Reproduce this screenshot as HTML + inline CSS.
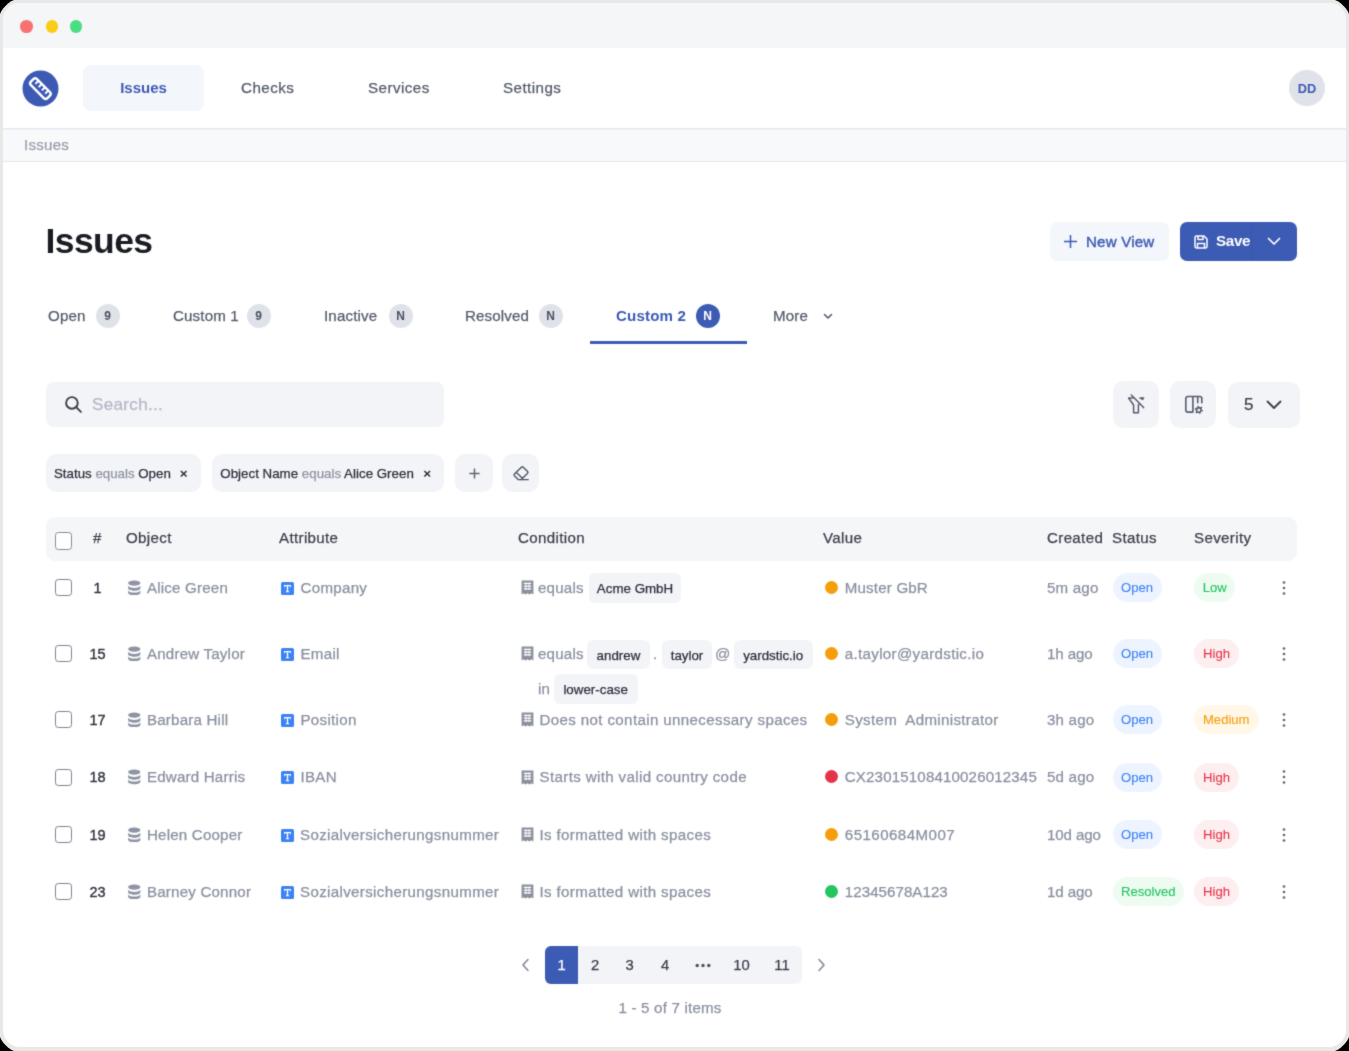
<!DOCTYPE html>
<html>
<head>
<meta charset="utf-8">
<title>Issues</title>
<style>
*{box-sizing:border-box;margin:0;padding:0}
html,body{width:1349px;height:1051px;overflow:hidden;background:#000;font-family:"Liberation Sans",sans-serif;}
.abs{position:absolute}
#frame{position:absolute;left:0;top:0;width:1349px;height:1051px;background:#e8e8e6;clip-path:polygon(0px 14px,1.3px 11.2px,3.3px 8.3px,5.7px 5.7px,8.3px 3.3px,11.2px 1.3px,14px 0px,1335px 0px,1337.8px 1.3px,1340.7px 3.3px,1343.3px 5.7px,1345.7px 8.3px,1347.7px 11.2px,1349px 14px,1349px 1037px,1347.7px 1039.8px,1345.7px 1042.7px,1343.3px 1045.3px,1340.7px 1047.7px,1337.8px 1049.7px,1335px 1051px,14px 1051px,11.2px 1049.7px,8.3px 1047.7px,5.7px 1045.3px,3.3px 1042.7px,1.3px 1039.8px,0px 1037px);overflow:hidden}
#win{position:absolute;left:3px;top:3px;width:1343px;height:1044px;background:#fff;border-radius:17px;overflow:hidden}
/* coordinates inside #win are offset by -3px; use #pg with translate to keep page coords */
#pg{position:absolute;left:-3px;top:-3px;width:1349px;height:1051px;will-change:transform;-webkit-font-smoothing:antialiased;filter:url(#soft)}
#titlebar{left:0;top:0;width:1349px;height:48.400px;background:#f4f6f8}
.dot{position:absolute;width:12.600px;height:12.600px;border-radius:50%;top:20.200px}
#nav{left:0;top:48px;width:1349px;height:81px;background:#fff}
#crumb{left:0;top:129px;width:1349px;height:32.500px;background:#f8f9fb}
.hl{left:0;width:1349px;height:1px;background:#e4e6ed}
.t{position:absolute;white-space:nowrap;line-height:20px;height:20px;-webkit-text-stroke:0.250px currentColor}
.b{font-weight:bold;-webkit-text-stroke:0 transparent}
.navitem{font-size:15.200px;letter-spacing:0.430px;color:#555b6b;top:78.300px}

.tab{font-size:15.100px;letter-spacing:0.150px;color:#555b6b;top:305.600px}
.badge{position:absolute;top:303.500px;width:24px;height:24px;border-radius:50%;background:#dfe2e8;color:#4b5160;font-size:12px;font-weight:bold;text-align:center;line-height:24px}
.ibtn{position:absolute;background:#f3f4f8;border-radius:8px}
.chip{position:absolute;top:454.100px;height:38.300px;border-radius:10px;background:#f3f4f8}
.ct{font-size:13.300px;top:463.800px;color:#2b2f3a}
.ct i{font-style:normal;color:#8e94a3}

.th{font-size:15.100px;letter-spacing:0.350px;color:#3a3f4b;top:528.400px}
.cb{position:absolute;left:54.600px;width:17px;height:17px;border:1.600px solid #7b8195;border-radius:3.300px;background:#fff;margin-top:1.100px}
.num{font-size:14.500px;-webkit-text-stroke:0.380px currentColor;color:#2f343f;margin-top:0.800px;left:77.600px;width:40px;text-align:center}
.g{font-size:15.100px;letter-spacing:0.200px;color:#8a90a0;margin-top:0.800px}
.cchip{position:absolute;height:29.500px;border-radius:6px;background:#f3f4f8;font-size:13.350px;line-height:31px;color:#2b2f3a;-webkit-text-stroke:0.250px #2b2f3a;text-align:center;white-space:nowrap}
.vdot{position:absolute;left:824.700px;width:13.300px;height:13.300px;border-radius:50%;margin-top:0.600px}
.pill{position:absolute;height:29px;border-radius:14.500px;font-size:13.100px;line-height:29.600px;margin-top:0.400px;-webkit-text-stroke:0.100px currentColor;text-align:center;white-space:nowrap}
.open{left:1112.500px;width:49.200px;background:#eef4ff;color:#3b82f6}
.res{left:1112.500px;width:71.700px;background:#edfbf1;color:#22c55e}
.high{left:1193.900px;width:45.200px;background:#fdeef0;color:#e5344a}
.low{left:1193.900px;width:41.500px;background:#edfbf1;color:#22c55e}
.med{left:1193.900px;width:64.700px;background:#fff7e8;color:#f59e0b}
.pg{font-size:14.800px;color:#3a3f4b;top:954.800px;text-align:center}
</style>
</head>
<body>
<svg width="0" height="0" style="position:absolute"><defs><filter id="soft" x="0" y="0" width="100%" height="100%" color-interpolation-filters="sRGB"><feConvolveMatrix order="3" kernelMatrix="0.0192 0.1001 0.0192 0.1001 0.5228 0.1001 0.0192 0.1001 0.0192" edgeMode="duplicate" preserveAlpha="false"/></filter></defs></svg>
<div id="frame"><div id="win"><div id="pg">

<!-- title bar -->
<div id="titlebar" class="abs"></div>
<div class="dot" style="left:20.400px;background:#f87171"></div>
<div class="dot" style="left:45.800px;background:#facc15"></div>
<div class="dot" style="left:69.900px;background:#4ade80"></div>

<!-- nav -->
<div id="nav" class="abs"></div>
<svg class="abs" style="left:22px;top:69.500px" width="37" height="37" viewBox="0 0 37 37">
  <circle cx="18.500" cy="18.500" r="18" fill="#3c5ab4"/>
  <g transform="translate(18.400 18.600) rotate(45)" fill="none" stroke="#fff">
    <rect x="-11.700" y="-4.300" width="23.400" height="8.600" rx="2.600" stroke-width="2.400"/>
    <path d="M-6.900 -4.300v4.500M-2.300 -4.300v4.500M2.300 -4.300v4.500M6.900 -4.300v4.500" stroke-width="2"/>
  </g>
</svg>
<div class="abs" style="left:83px;top:65px;width:121px;height:46px;border-radius:8px;background:#f3f6fb"></div>
<div class="t b" style="left:83px;width:121px;text-align:center;top:78px;font-size:15px;color:#3d5ab3">Issues</div>
<div class="t navitem" style="left:241px">Checks</div>
<div class="t navitem" style="left:368px">Services</div>
<div class="t navitem" style="left:503px">Settings</div>
<div class="abs" style="left:1288.900px;top:70.400px;width:36px;height:36px;border-radius:50%;background:#dfe2e9"></div>
<div class="t b" style="left:1288.900px;width:36px;text-align:center;top:78.600px;font-size:12.800px;color:#3d5ab3">DD</div>

<!-- breadcrumb -->
<div id="crumb" class="abs"></div>
<div class="abs hl" style="top:128px"></div>
<div class="abs hl" style="top:129px;background:#eff0f5"></div>
<div class="abs hl" style="top:161px"></div>
<div class="t" style="left:24px;top:135.400px;font-size:15.100px;letter-spacing:0.250px;color:#9a9fad">Issues</div>

<!-- heading -->
<div class="t b" style="left:45.500px;top:220.200px;height:42px;line-height:42px;font-size:35.500px;letter-spacing:-0.600px;color:#1a1c23">Issues</div>


<!-- New View / Save -->
<div class="abs" style="left:1049.500px;top:222.300px;width:119.500px;height:38.400px;border-radius:7px;background:#f3f6fb"></div>
<svg class="abs" style="left:1063px;top:234.300px" width="15" height="15" viewBox="0 0 15 15"><path d="M7.5 1v13M1 7.5h13" stroke="#3d5ab3" stroke-width="1.5" fill="none"/></svg>
<div class="t" style="left:1086px;top:232.100px;font-size:15.100px;letter-spacing:0.200px;-webkit-text-stroke:0.400px #3d5ab3;color:#3d5ab3">New View</div>
<div class="abs" style="left:1180.200px;top:222.300px;width:117px;height:38.300px;border-radius:7px;background:#3c5bb4"></div>
<div class="abs" style="left:1251px;top:222.300px;width:1px;height:38.400px;background:#3857ae"></div>
<svg class="abs" style="left:1193px;top:233.700px" width="16" height="16" viewBox="0 0 16 16" fill="none" stroke="#fff" stroke-width="1.5" stroke-linejoin="round"><path d="M2 3.5A1.5 1.5 0 0 1 3.500 2H11l3 3v7.500A1.500 1.500 0 0 1 12.500 14h-9A1.500 1.500 0 0 1 2 12.500z"/><path d="M5 2v3.500h5V2M4.500 14V9.500h7V14"/></svg>
<div class="t b" style="left:1216px;top:231px;font-size:15.200px;letter-spacing:-0.350px;color:#fff">Save</div>
<svg class="abs" style="left:1267.300px;top:237.400px" width="14" height="9" viewBox="0 0 14 9"><path d="M1.500 1.500L7 7l5.500-5.500" stroke="#fff" stroke-width="1.700" fill="none" stroke-linecap="round" stroke-linejoin="round"/></svg>

<!-- tabs -->
<div class="t tab" style="left:48px">Open</div><div class="badge" style="left:95.500px">9</div>
<div class="t tab" style="left:173px">Custom 1</div><div class="badge" style="left:246.500px">9</div>
<div class="t tab" style="left:324px">Inactive</div><div class="badge" style="left:388.500px">N</div>
<div class="t tab" style="left:465px">Resolved</div><div class="badge" style="left:538.700px">N</div>
<div class="t tab b" style="left:616px;color:#3d5ab3">Custom 2</div><div class="badge" style="left:695.500px;background:#3c5bb4;color:#fff">N</div>
<div class="abs" style="left:590px;top:340.500px;width:156.500px;height:3.500px;background:#3c5bb4"></div>
<div class="t tab" style="left:773px">More</div>
<svg class="abs" style="left:822.700px;top:313px" width="10" height="7" viewBox="0 0 10 7"><path d="M1.500 1.500L5 5l3.500-3.500" stroke="#555b6b" stroke-width="1.600" fill="none" stroke-linecap="round" stroke-linejoin="round"/></svg>

<!-- search -->
<div class="ibtn" style="left:46px;top:381.700px;width:398px;height:45.500px"></div>
<svg class="abs" style="left:63.500px;top:395px" width="19" height="19" viewBox="0 0 18 18" fill="none" stroke="#3a3f4b" stroke-width="1.800" stroke-linecap="round"><circle cx="7.500" cy="7.500" r="5.500"/><path d="M11.700 11.700L16 16"/></svg>
<div class="t" style="left:92px;top:395.400px;font-size:17px;letter-spacing:0.350px;color:#b3b8c6">Search...</div>

<!-- right tool buttons -->
<div class="ibtn" style="left:1113px;top:381px;width:46px;height:47px;border-radius:10px"></div>
<div class="ibtn" style="left:1170px;top:381px;width:46px;height:47px;border-radius:10px"></div>
<div class="ibtn" style="left:1228px;top:382px;width:72px;height:46px;border-radius:10px"></div>
<svg class="abs" style="left:1125px;top:392px" width="22" height="24" viewBox="0 0 22 24" fill="none" stroke="#565c6c" stroke-width="1.500" stroke-linejoin="round" stroke-linecap="butt"><path d="M8.600 6H3.600L8.600 13V20.800H13.400V13L14.500 11.600"/><path d="M14.500 6H18.600L17.100 7.900" fill="#565c6c"/><path d="M6.300 3L18.600 15.600" stroke-linecap="round"/></svg>
<svg class="abs" style="left:1183px;top:394px" width="22" height="22" viewBox="0 0 22 22" fill="none" stroke="#565c6c" stroke-width="1.600" stroke-linejoin="round" stroke-linecap="round"><path d="M9.900 18.100H4.800a2 2 0 0 1-2-2V4.500a2 2 0 0 1 2-2H16.800a2 2 0 0 1 2 2V8.800M9.900 2.500V18.100M14.700 2.500V8.800"/><circle cx="15.800" cy="15.900" r="2.300"/><circle cx="15.800" cy="15.900" r="3.500" stroke-width="1.300" stroke-dasharray="1.300 2.365" stroke-linecap="butt"/></svg>
<div class="t" style="left:1244px;top:395.200px;font-size:17px;color:#3a3f4b">5</div>
<svg class="abs" style="left:1266px;top:400.300px" width="16" height="10" viewBox="0 0 16 10"><path d="M1.500 1.500L8 8l6.500-6.500" stroke="#3a3f4b" stroke-width="1.800" fill="none" stroke-linecap="round" stroke-linejoin="round"/></svg>

<!-- filter chips -->
<div class="chip" style="left:46px;width:154.500px"></div>
<div class="t ct" style="left:54px">Status <i>equals</i> Open</div>
<div class="t ct b" style="left:179.800px;font-size:13.500px">×</div>
<div class="chip" style="left:211.700px;width:232.300px"></div>
<div class="t ct" style="left:220.300px;letter-spacing:0.020px">Object Name <i>equals</i> Alice Green</div>
<div class="t ct b" style="left:423.300px;font-size:13.500px">×</div>
<div class="chip" style="left:455px;width:38px"></div>
<svg class="abs" style="left:468.850px;top:467.700px" width="11" height="11" viewBox="0 0 11 11"><path d="M5.500 0.400v10.200M0.400 5.500h10.200" stroke="#5d6373" stroke-width="1.450" fill="none"/></svg>
<div class="chip" style="left:502px;width:37px"></div>
<svg class="abs" style="left:510px;top:463px" width="22" height="20" viewBox="0 0 22 20" fill="none" stroke="#4f5565" stroke-width="1.400" stroke-linejoin="round" stroke-linecap="round"><path d="M18.2 16.65H8.41L4.65 13.01Q3.50 11.90 4.64 10.78L11.16 4.42Q12.30 3.30 13.45 4.41L17.35 8.19Q18.50 9.30 17.36 10.42L10.98 16.65M6.14 9.32L12.34 15.32"/></svg>


<!-- table header -->
<div class="abs" style="left:46px;top:516.600px;width:1251px;height:44.200px;border-radius:9px;background:#f5f6f8"></div>
<div class="cb" style="top:531.100px;height:17.600px;border-color:#858b9e"></div>
<div class="t th" style="left:93px">#</div>
<div class="t th" style="left:126px">Object</div>
<div class="t th" style="left:279px">Attribute</div>
<div class="t th" style="left:518px">Condition</div>
<div class="t th" style="left:823px">Value</div>
<div class="t th" style="left:1047px">Created</div>
<div class="t th" style="left:1112px">Status</div>
<div class="t th" style="left:1194px">Severity</div>

<!-- row 1 -->
<div class="cb" style="top:578px"></div><div class="t num" style="top:577px">1</div><svg class="abs" style="left:127.300px;top:579.5px" width="14.500" height="15.600" viewBox="0 0 13 14" fill="#8e94a3"><ellipse cx="6.500" cy="2.800" rx="5.500" ry="2.300"/><path d="M1 5.200c1 1.400 3 1.900 5.500 1.900s4.500-.5 5.500-1.900v2.200c0 1.300-2.500 2.300-5.500 2.300S1 8.700 1 7.400z"/><path d="M1 9.400c1 1.400 3 1.900 5.500 1.900s4.500-.5 5.500-1.900v2c0 1.300-2.500 2.300-5.500 2.300S1 12.700 1 11.400z"/></svg><div class="t g" style="left:147px;top:577px">Alice Green</div><svg class="abs" style="left:281.400px;top:581.5px" width="13" height="13" viewBox="0 0 13 13"><rect width="13" height="13" rx="1.500" fill="#3b82f6"/><path d="M3 3h7v2.200H9.200V4.200H7.200v5h1v1H4.800v-1h1v-5H3.800v1H3z" fill="#fff"/></svg><div class="t g" style="left:300.500px;top:577px;letter-spacing:0.300px">Company</div><svg class="abs" style="left:520.500px;top:580.3px" width="13" height="15" viewBox="0 0 12 14"><path d="M0.500 0.500h11v13l-1.800-1.200-1.900 1.200-1.800-1.200-1.800 1.200-1.900-1.200L0.500 13.500z" fill="#8a8f9c"/><path d="M2.500 3.200h7M2.500 5.700h7M2.500 8.200h7" stroke="#fff" stroke-width="1.100"/><path d="M4.500 2.500v7M7.500 2.500v7" stroke="#fff" stroke-width="0.800"/></svg><div class="vdot" style="top:580px;background:#f59e0b"></div><div class="t g" style="left:844.800px;top:577px;letter-spacing:0.180px">Muster GbR</div><div class="t g" style="left:1047px;top:577px">5m ago</div><div class="pill open" style="top:573px">Open</div><div class="pill low" style="top:573px">Low</div><svg class="abs" style="left:1281.100px;top:579.7px" width="6" height="16" viewBox="0 0 6 16" fill="#5f6575"><circle cx="3" cy="2.500" r="1.350"/><circle cx="3" cy="8" r="1.350"/><circle cx="3" cy="13.500" r="1.350"/></svg>
<!-- row 15 -->
<div class="cb" style="top:644px"></div><div class="t num" style="top:643px">15</div><svg class="abs" style="left:127.300px;top:645.5px" width="14.500" height="15.600" viewBox="0 0 13 14" fill="#8e94a3"><ellipse cx="6.500" cy="2.800" rx="5.500" ry="2.300"/><path d="M1 5.200c1 1.400 3 1.900 5.500 1.900s4.500-.5 5.500-1.900v2.200c0 1.300-2.500 2.300-5.500 2.300S1 8.700 1 7.400z"/><path d="M1 9.400c1 1.400 3 1.900 5.500 1.900s4.500-.5 5.500-1.900v2c0 1.300-2.500 2.300-5.500 2.300S1 12.700 1 11.400z"/></svg><div class="t g" style="left:147px;top:643px">Andrew Taylor</div><svg class="abs" style="left:281.400px;top:647.5px" width="13" height="13" viewBox="0 0 13 13"><rect width="13" height="13" rx="1.500" fill="#3b82f6"/><path d="M3 3h7v2.200H9.200V4.200H7.200v5h1v1H4.800v-1h1v-5H3.800v1H3z" fill="#fff"/></svg><div class="t g" style="left:300.500px;top:643px;letter-spacing:0.300px">Email</div><svg class="abs" style="left:520.500px;top:646.3px" width="13" height="15" viewBox="0 0 12 14"><path d="M0.500 0.500h11v13l-1.800-1.200-1.900 1.200-1.800-1.200-1.800 1.200-1.900-1.200L0.500 13.500z" fill="#8a8f9c"/><path d="M2.500 3.200h7M2.500 5.700h7M2.500 8.200h7" stroke="#fff" stroke-width="1.100"/><path d="M4.500 2.500v7M7.500 2.500v7" stroke="#fff" stroke-width="0.800"/></svg><div class="vdot" style="top:646px;background:#f59e0b"></div><div class="t g" style="left:844.800px;top:643px;letter-spacing:0.330px">a.taylor@yardstic.io</div><div class="t g" style="left:1047px;top:643px;letter-spacing:-0.100px">1h ago</div><div class="pill open" style="top:639px">Open</div><div class="pill high" style="top:639px">High</div><svg class="abs" style="left:1281.100px;top:645.7px" width="6" height="16" viewBox="0 0 6 16" fill="#5f6575"><circle cx="3" cy="2.500" r="1.350"/><circle cx="3" cy="8" r="1.350"/><circle cx="3" cy="13.500" r="1.350"/></svg>
<!-- row 17 -->
<div class="abs" style="left:0;top:0px;width:0;height:0"><div class="cb" style="top:710px"></div><div class="t num" style="top:709px">17</div><svg class="abs" style="left:127.300px;top:711.5px" width="14.500" height="15.600" viewBox="0 0 13 14" fill="#8e94a3"><ellipse cx="6.500" cy="2.800" rx="5.500" ry="2.300"/><path d="M1 5.200c1 1.400 3 1.900 5.500 1.900s4.500-.5 5.500-1.900v2.200c0 1.300-2.500 2.300-5.500 2.300S1 8.700 1 7.400z"/><path d="M1 9.400c1 1.400 3 1.900 5.500 1.900s4.500-.5 5.500-1.900v2c0 1.300-2.500 2.300-5.500 2.300S1 12.700 1 11.400z"/></svg><div class="t g" style="left:147px;top:709px">Barbara Hill</div><svg class="abs" style="left:281.400px;top:713.5px" width="13" height="13" viewBox="0 0 13 13"><rect width="13" height="13" rx="1.500" fill="#3b82f6"/><path d="M3 3h7v2.200H9.200V4.200H7.200v5h1v1H4.800v-1h1v-5H3.800v1H3z" fill="#fff"/></svg><div class="t g" style="left:300.500px;top:709px;letter-spacing:0.300px">Position</div><svg class="abs" style="left:520.500px;top:712.3px" width="13" height="15" viewBox="0 0 12 14"><path d="M0.500 0.500h11v13l-1.800-1.200-1.900 1.200-1.800-1.200-1.800 1.200-1.900-1.200L0.500 13.500z" fill="#8a8f9c"/><path d="M2.500 3.200h7M2.500 5.700h7M2.500 8.200h7" stroke="#fff" stroke-width="1.100"/><path d="M4.500 2.500v7M7.500 2.500v7" stroke="#fff" stroke-width="0.800"/></svg><div class="t g" style="left:539.500px;top:709px;letter-spacing:0.370px">Does not contain unnecessary spaces</div><div class="vdot" style="top:712px;background:#f59e0b"></div><div class="t g" style="left:844.800px;top:709px;letter-spacing:0.330px">System&nbsp; Administrator</div><div class="t g" style="left:1047px;top:709px">3h ago</div><div class="pill open" style="top:705px">Open</div><div class="pill med" style="top:705px">Medium</div><svg class="abs" style="left:1281.100px;top:711.7px" width="6" height="16" viewBox="0 0 6 16" fill="#5f6575"><circle cx="3" cy="2.500" r="1.350"/><circle cx="3" cy="8" r="1.350"/><circle cx="3" cy="13.500" r="1.350"/></svg></div>
<!-- row 18 -->
<div class="abs" style="left:0;top:0.6px;width:0;height:0"><div class="cb" style="top:767px"></div><div class="t num" style="top:766px">18</div><svg class="abs" style="left:127.300px;top:768.5px" width="14.500" height="15.600" viewBox="0 0 13 14" fill="#8e94a3"><ellipse cx="6.500" cy="2.800" rx="5.500" ry="2.300"/><path d="M1 5.200c1 1.400 3 1.900 5.500 1.900s4.500-.5 5.500-1.900v2.200c0 1.300-2.500 2.300-5.500 2.300S1 8.700 1 7.400z"/><path d="M1 9.400c1 1.400 3 1.900 5.500 1.900s4.500-.5 5.500-1.900v2c0 1.300-2.500 2.300-5.500 2.300S1 12.700 1 11.400z"/></svg><div class="t g" style="left:147px;top:766px">Edward Harris</div><svg class="abs" style="left:281.400px;top:770.5px" width="13" height="13" viewBox="0 0 13 13"><rect width="13" height="13" rx="1.500" fill="#3b82f6"/><path d="M3 3h7v2.200H9.200V4.200H7.200v5h1v1H4.800v-1h1v-5H3.800v1H3z" fill="#fff"/></svg><div class="t g" style="left:300.500px;top:766px;letter-spacing:0.300px">IBAN</div><svg class="abs" style="left:520.500px;top:769.3px" width="13" height="15" viewBox="0 0 12 14"><path d="M0.500 0.500h11v13l-1.800-1.200-1.900 1.200-1.800-1.200-1.800 1.200-1.900-1.200L0.500 13.500z" fill="#8a8f9c"/><path d="M2.500 3.200h7M2.500 5.700h7M2.500 8.200h7" stroke="#fff" stroke-width="1.100"/><path d="M4.500 2.500v7M7.500 2.500v7" stroke="#fff" stroke-width="0.800"/></svg><div class="t g" style="left:539.500px;top:766px;letter-spacing:0.370px">Starts with valid country code</div><div class="vdot" style="top:769px;background:#e5344a"></div><div class="t g" style="left:844.800px;top:766px;letter-spacing:0.150px">CX23015108410026012345</div><div class="t g" style="left:1047px;top:766px">5d ago</div><div class="pill open" style="top:762px">Open</div><div class="pill high" style="top:762px">High</div><svg class="abs" style="left:1281.100px;top:768.7px" width="6" height="16" viewBox="0 0 6 16" fill="#5f6575"><circle cx="3" cy="2.500" r="1.350"/><circle cx="3" cy="8" r="1.350"/><circle cx="3" cy="13.500" r="1.350"/></svg></div>
<!-- row 19 -->
<div class="abs" style="left:0;top:1.0px;width:0;height:0"><div class="cb" style="top:824px"></div><div class="t num" style="top:823px">19</div><svg class="abs" style="left:127.300px;top:825.5px" width="14.500" height="15.600" viewBox="0 0 13 14" fill="#8e94a3"><ellipse cx="6.500" cy="2.800" rx="5.500" ry="2.300"/><path d="M1 5.200c1 1.400 3 1.900 5.500 1.900s4.500-.5 5.500-1.900v2.200c0 1.300-2.500 2.300-5.500 2.300S1 8.700 1 7.400z"/><path d="M1 9.400c1 1.400 3 1.900 5.500 1.900s4.500-.5 5.500-1.900v2c0 1.300-2.500 2.300-5.500 2.300S1 12.700 1 11.400z"/></svg><div class="t g" style="left:147px;top:823px">Helen Cooper</div><svg class="abs" style="left:281.400px;top:827.5px" width="13" height="13" viewBox="0 0 13 13"><rect width="13" height="13" rx="1.500" fill="#3b82f6"/><path d="M3 3h7v2.200H9.200V4.200H7.200v5h1v1H4.800v-1h1v-5H3.800v1H3z" fill="#fff"/></svg><div class="t g" style="left:300px;top:823px;letter-spacing:0.350px">Sozialversicherungsnummer</div><svg class="abs" style="left:520.500px;top:826.3px" width="13" height="15" viewBox="0 0 12 14"><path d="M0.500 0.500h11v13l-1.800-1.200-1.900 1.200-1.800-1.200-1.800 1.200-1.900-1.200L0.500 13.500z" fill="#8a8f9c"/><path d="M2.500 3.200h7M2.500 5.700h7M2.500 8.200h7" stroke="#fff" stroke-width="1.100"/><path d="M4.500 2.500v7M7.500 2.500v7" stroke="#fff" stroke-width="0.800"/></svg><div class="t g" style="left:539.500px;top:823px;letter-spacing:0.370px">Is formatted with spaces</div><div class="vdot" style="top:826px;background:#f59e0b"></div><div class="t g" style="left:844.800px;top:823px;letter-spacing:0.450px">65160684M007</div><div class="t g" style="left:1047px;top:823px;letter-spacing:-0.100px">10d ago</div><div class="pill open" style="top:819px">Open</div><div class="pill high" style="top:819px">High</div><svg class="abs" style="left:1281.100px;top:825.7px" width="6" height="16" viewBox="0 0 6 16" fill="#5f6575"><circle cx="3" cy="2.500" r="1.350"/><circle cx="3" cy="8" r="1.350"/><circle cx="3" cy="13.500" r="1.350"/></svg></div>
<!-- row 23 -->
<div class="abs" style="left:0;top:1.0px;width:0;height:0"><div class="cb" style="top:881px"></div><div class="t num" style="top:880px">23</div><svg class="abs" style="left:127.300px;top:882.5px" width="14.500" height="15.600" viewBox="0 0 13 14" fill="#8e94a3"><ellipse cx="6.500" cy="2.800" rx="5.500" ry="2.300"/><path d="M1 5.200c1 1.400 3 1.900 5.500 1.900s4.500-.5 5.500-1.900v2.200c0 1.300-2.500 2.300-5.500 2.300S1 8.700 1 7.400z"/><path d="M1 9.400c1 1.400 3 1.900 5.500 1.900s4.500-.5 5.500-1.900v2c0 1.300-2.500 2.300-5.500 2.300S1 12.700 1 11.400z"/></svg><div class="t g" style="left:147px;top:880px">Barney Connor</div><svg class="abs" style="left:281.400px;top:884.5px" width="13" height="13" viewBox="0 0 13 13"><rect width="13" height="13" rx="1.500" fill="#3b82f6"/><path d="M3 3h7v2.200H9.200V4.200H7.200v5h1v1H4.800v-1h1v-5H3.800v1H3z" fill="#fff"/></svg><div class="t g" style="left:300px;top:880px;letter-spacing:0.350px">Sozialversicherungsnummer</div><svg class="abs" style="left:520.500px;top:883.3px" width="13" height="15" viewBox="0 0 12 14"><path d="M0.500 0.500h11v13l-1.800-1.200-1.900 1.200-1.800-1.200-1.800 1.200-1.900-1.200L0.500 13.500z" fill="#8a8f9c"/><path d="M2.500 3.200h7M2.500 5.700h7M2.500 8.200h7" stroke="#fff" stroke-width="1.100"/><path d="M4.500 2.500v7M7.500 2.500v7" stroke="#fff" stroke-width="0.800"/></svg><div class="t g" style="left:539.500px;top:880px;letter-spacing:0.370px">Is formatted with spaces</div><div class="vdot" style="top:883px;background:#22c55e"></div><div class="t g" style="left:844.800px;top:880px;letter-spacing:0.050px">12345678A123</div><div class="t g" style="left:1047px;top:880px;letter-spacing:-0.100px">1d ago</div><div class="pill res" style="top:876px">Resolved</div><div class="pill high" style="top:876px">High</div><svg class="abs" style="left:1281.100px;top:882.7px" width="6" height="16" viewBox="0 0 6 16" fill="#5f6575"><circle cx="3" cy="2.500" r="1.350"/><circle cx="3" cy="8" r="1.350"/><circle cx="3" cy="13.500" r="1.350"/></svg></div>
<!-- conditions with chips -->
<div class="t g" style="left:538px;top:577px">equals</div>
<div class="cchip" style="left:589px;top:573px;width:92px">Acme GmbH</div>
<div class="t g" style="left:538px;top:643px">equals</div>
<div class="cchip" style="left:587.300px;top:639.600px;width:62.400px">andrew</div>
<div class="t g" style="left:653px;top:643px">.</div>
<div class="cchip" style="left:662px;top:639.600px;width:50px">taylor</div>
<div class="t g" style="left:715px;top:643px">@</div>
<div class="cchip" style="left:733.600px;top:639.600px;width:79.200px">yardstic.io</div>
<div class="t g" style="left:538px;top:678px">in</div>
<div class="cchip" style="left:553.500px;top:674.300px;width:84.300px">lower-case</div>

<!-- pagination -->
<svg class="abs" style="left:520.800px;top:958px" width="9" height="14" viewBox="0 0 9 14"><path d="M7 1.500L2 7l5 5.500" stroke="#7f8595" stroke-width="1.500" fill="none" stroke-linecap="round" stroke-linejoin="round"/></svg>
<div class="abs" style="left:545px;top:946px;width:257px;height:38px;border-radius:6px;background:#f3f4f8"></div>
<div class="abs" style="left:545px;top:946px;width:33px;height:38px;border-radius:6px 0 0 6px;background:#3c5bb4"></div>
<div class="t pg" style="left:545px;width:33px;color:#fff">1</div>
<div class="t pg" style="left:578px;width:34px">2</div>
<div class="t pg" style="left:612px;width:35px">3</div>
<div class="t pg" style="left:647px;width:36px">4</div>
<svg class="abs" style="left:694.500px;top:962.500px" width="16" height="5" viewBox="0 0 16 5" fill="#4b5160"><circle cx="2.200" cy="2.500" r="1.700"/><circle cx="8" cy="2.500" r="1.700"/><circle cx="13.800" cy="2.500" r="1.700"/></svg>
<div class="t pg" style="left:721px;width:41px">10</div>
<div class="t pg" style="left:762px;width:40px">11</div>
<svg class="abs" style="left:817px;top:958px" width="9" height="14" viewBox="0 0 9 14"><path d="M2 1.500L7 7l-5 5.500" stroke="#7f8595" stroke-width="1.500" fill="none" stroke-linecap="round" stroke-linejoin="round"/></svg>
<div class="t g" style="left:570px;width:200px;text-align:center;top:997px">1 - 5 of 7 items</div>

<!--MORE-->


</div></div></div>
</body>
</html>
